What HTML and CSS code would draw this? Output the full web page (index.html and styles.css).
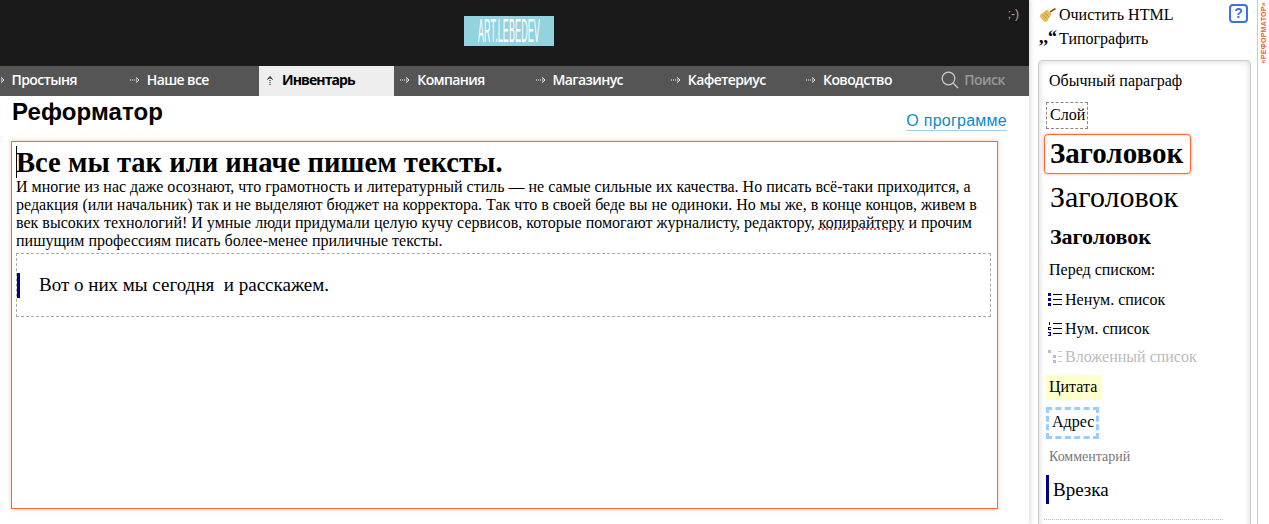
FILE: index.html
```html
<!DOCTYPE html>
<html lang="ru">

<head>
    <meta charset="UTF-8">
    <title>Реформатор</title>
    <link rel="stylesheet" href="styles.css">
</head>

<body>
    <svg class="defs" width="0" height="0">
        <symbol id="arr" viewBox="0 0 10 10">
            <path d="M0 5H8" fill="none" stroke="currentColor" stroke-dasharray="1 1"/>
            <path d="M6 2.5L9 5L6 7.5" fill="none" stroke="currentColor"/>
        </symbol>
    </svg>

    <div class="main">
        <div class="top">
            <div class="logo"><span>ART.LEBEDEV</span></div>
            <div class="smile">;-)</div>
        </div>
        <div class="nav">
            <a class="tab first"><svg class="arr"><use href="#arr"/></svg>Простыня</a>
            <a class="tab"><svg class="arr"><use href="#arr"/></svg>Наше все</a>
            <a class="tab active"><svg class="arr" viewBox="0 0 10 10"><path d="M5 10V2" fill="none" stroke="#000" stroke-dasharray="1 1"/><path d="M2.5 4.5L5 1.5L7.5 4.5" fill="none" stroke="#000"/></svg>Инвентарь</a>
            <a class="tab"><svg class="arr"><use href="#arr"/></svg>Компания</a>
            <a class="tab"><svg class="arr"><use href="#arr"/></svg>Магазинус</a>
            <a class="tab"><svg class="arr"><use href="#arr"/></svg>Кафетериус</a>
            <a class="tab"><svg class="arr"><use href="#arr"/></svg>Ководство</a>
            <div class="search">
                <svg width="18" height="18" viewBox="0 0 18 18"><circle cx="7.5" cy="7.5" r="6.3" fill="none" stroke="#ccc" stroke-width="1.2"/><path d="M12 12L17 17" stroke="#ccc" stroke-width="1.2"/></svg>
                Поиск
            </div>
        </div>
        <div class="title">
            <h1>Реформатор</h1>
            <a class="about">О программе</a>
        </div>
        <div class="editor">
            <h2 class="big"><span class="caret"></span>Все мы так или иначе пишем тексты.</h2>
            <p>И многие из нас даже осознают, что грамотность и литературный стиль &mdash; не самые сильные их качества. Но писать всё-таки приходится, а редакция (или начальник) так и не выделяют бюджет на корректора. Так что в своей беде вы не одиноки. Но мы же, в конце концов, живем в век высоких технологий! И умные люди придумали целую кучу сервисов, которые помогают журналисту, редактору, <span class="typo">копирайтеру</span> и прочим пишущим профессиям писать более-менее приличные тексты.</p>
            <div class="layer">
                <div class="inset">Вот о них мы сегодня &nbsp;и расскажем.</div>
            </div>
        </div>
    </div>

    <div class="side">
        <div class="tools">
            <div class="tool">
                <svg class="broom" width="17" height="15" viewBox="0 0 17 15">
                    <path d="M11 4L16.5 .5" stroke="#7a5a20" stroke-width="1.6"/>
                    <path d="M8 1.5L12.5 6L8 13.5L5.5 14L.5 8.5L1.5 6.5Z" fill="#e6bd5c"/>
                    <path d="M4 7L8 11M6 5L10 9" stroke="#b98d33" stroke-width=".8"/>
                </svg>
                Очистить HTML
            </div>
            <div class="tool"><span class="quotes">,,“</span> Типографить</div>
            <div class="help">?</div>
        </div>
        <div class="panel">
            <div class="pt">Обычный параграф</div>
            <div class="pt-layer">Слой</div>
            <div class="pt-h1">Заголовок</div>
            <div class="pt-h2">Заголовок</div>
            <div class="pt-h3">Заголовок</div>
            <div class="pt pt-before">Перед списком:</div>
            <div class="pt-list">
                <svg width="15" height="14" viewBox="0 0 15 14"><path d="M0 0h3v3H0zM0 5h3v3H0zM0 10h3v3H0z" fill="#000099"/><path d="M5 1.5h9M5 6.5h9M5 11.5h9" stroke="#000"/></svg>
                Ненум. список
            </div>
            <div class="pt-list">
                <svg width="15" height="14" viewBox="0 0 15 14"><path d="M1 0h1v3H1zM0 5h3v1H1v1h2v1H0V6h2V6H0zM0 10h3v4H0v-1h2v-.5H1v-1h1V11H0z" fill="#000099"/><path d="M5 1.5h9M5 6.5h9M5 11.5h9" stroke="#000"/></svg>
                Нум. список
            </div>
            <div class="pt-list off">
                <svg width="15" height="14" viewBox="0 0 15 14"><path d="M0 0h3v3H0zM5 5h3v3H5zM5 10h3v3H5z" fill="#b8b8e0"/><path d="M10 1.5h4M10 6.5h4M10 11.5h4" stroke="#ccc"/></svg>
                Вложенный список
            </div>
            <div class="pt-quote">Цитата</div>
            <div class="pt-addr">Адрес</div>
            <div class="pt-comment">Комментарий</div>
            <div class="pt-inset">Врезка</div>
            <div class="pt-line"></div>
        </div>
    </div>

    <div class="strip"><span>«РЕФОРМАТОР»</span></div>
</body>

</html>
```

FILE: styles.css
```css
* {
    margin: 0;
    padding: 0;
    box-sizing: border-box;
}

html,
body {
    height: 100%;
    overflow: hidden;
}

body {
    display: flex;
    font-family: "Liberation Serif", serif;
    font-size: 16px;
    color: #000;
    background: #fff;
}

.defs {
    position: absolute;
}

.main {
    width: 1029px;
    flex: none;
    position: relative;
    z-index: 1;
    background: #fff;
    box-shadow: 2px 0 4px rgba(0, 0, 0, .12);
}

.top {
    height: 66px;
    background: #1a1a1a;
    display: flex;
    justify-content: center;
    position: relative;
    padding: 16px 11px 0 0;
}

.logo {
    width: 90px;
    height: 30px;
    background: #93d2df;
    display: flex;
    justify-content: center;
    align-items: center;
}

.logo span {
    flex: none;
    font-family: "Liberation Sans", sans-serif;
    font-size: 9px;
    line-height: 10px;
    letter-spacing: 0.1px;
    color: #fff;
    transform: scaleY(3.6);
}

.smile {
    position: absolute;
    right: 10px;
    top: 7px;
    font-family: "Liberation Sans", sans-serif;
    font-size: 12px;
    color: #aaa;
}

.nav {
    height: 30px;
    background: #555;
    display: flex;
    font-family: "Open Sans", sans-serif;
    font-size: 14px;
    font-weight: 600;
    line-height: 24px;
    color: #fff;
}

.tab {
    flex: 0 0 135.25px;
    padding: 0 0 3px 6px;
    display: flex;
    align-items: center;
    white-space: nowrap;
    letter-spacing: -0.6px;
}

.tab.first {
    margin-left: -11.5px;
}

.tab.active {
    background: #eee;
    color: #000;
    font-weight: 700;
    letter-spacing: -0.9px;
}

.arr {
    width: 10px;
    height: 10px;
    margin-right: 7px;
    flex: none;
}

.search {
    display: flex;
    align-items: center;
    gap: 5px;
    padding: 0 0 3px 6px;
    color: #999;
    white-space: nowrap;
    letter-spacing: -0.5px;
}

.title {
    height: 45px;
    padding: 2px 22px 0 12px;
    display: flex;
    justify-content: space-between;
    font-family: "Liberation Sans", sans-serif;
}

.title h1 {
    font-size: 24px;
    line-height: 28px;
    letter-spacing: 0.1px;
}

.about {
    height: 19px;
    margin-top: 14px;
    font-size: 16px;
    line-height: 18px;
    letter-spacing: 0.25px;
    color: #0a8acb;
    border-bottom: 1px solid #a5cfe8;
}

.editor {
    width: 987px;
    height: 368px;
    margin-left: 11px;
    padding: 4px 6px 0 4px;
    border: 1px solid #ff6633;
    box-shadow: 0 0 4px rgba(255, 102, 51, .4);
    font-size: 16px;
    line-height: 18px;
}

.big {
    position: relative;
    padding-top: 1px;
    font-size: 28.6px;
    line-height: 31px;
}

.caret {
    position: absolute;
    left: 0;
    top: 0;
    width: 1px;
    height: 32px;
    background: #000;
}

.typo {
    text-decoration: underline dotted #e02020;
}

.layer {
    height: 64px;
    margin-top: 3px;
    padding: 19px 0 0 0;
    border: 1px dashed #aaa;
}

.inset {
    height: 25px;
    padding-left: 19px;
    border-left: 3px solid #000088;
    font-size: 19px;
    line-height: 24px;
}

.side {
    width: 228px;
    flex: none;
    padding-left: 9px;
    overflow: hidden;
}

.tools {
    height: 60px;
    padding-top: 5px;
    position: relative;
}

.tool {
    height: 24px;
    line-height: 20px;
    white-space: nowrap;
    display: flex;
    align-items: flex-start;
    gap: 3px;
    padding-left: 1px;
}

.broom {
    margin-top: 3px;
}

.quotes {
    width: 17px;
    font-weight: 700;
    font-size: 18px;
    line-height: 16px;
}

.help {
    position: absolute;
    left: 191px;
    top: 4px;
    width: 19px;
    height: 19px;
    border: 2px solid #3b6ff0;
    border-radius: 4px;
    font-family: "Liberation Sans", sans-serif;
    font-size: 14px;
    font-weight: 700;
    line-height: 15px;
    text-align: center;
    color: #3b6ff0;
}

.panel {
    width: 213px;
    height: 520px;
    padding: 0 5px;
    border: 1px solid #ccc;
    border-radius: 4px;
    box-shadow: inset 0 0 6px rgba(0, 0, 0, .18);
}

.pt {
    margin: 10px 0 0 5px;
    line-height: 20px;
}

.pt-layer {
    width: 42px;
    height: 27px;
    margin: 11px 0 0 2px;
    padding-left: 3px;
    border: 1px dashed #888;
    line-height: 23px;
}

.pt-h1 {
    width: 147px;
    height: 40px;
    margin-top: 5px;
    padding-left: 5px;
    border: 1px solid #ff6633;
    border-radius: 4px;
    box-shadow: 0 0 3px rgba(255, 102, 51, .6);
    background: #fff;
    font-size: 29px;
    font-weight: 700;
    line-height: 37px;
}

.pt-h2 {
    margin: 6px 0 0 6px;
    font-size: 30px;
    line-height: 34px;
}

.pt-h3 {
    margin: 10px 0 0 6px;
    font-size: 22px;
    font-weight: 700;
    line-height: 26px;
}

.pt-before {
    margin-top: 10px;
}

.pt-list {
    height: 28.5px;
    margin-left: 4px;
    display: flex;
    align-items: center;
    gap: 2px;
    white-space: nowrap;
}

.pt-before + .pt-list {
    margin-top: 6px;
}

.off {
    color: #bbb;
}

.pt-quote {
    width: 55px;
    height: 25px;
    margin: 3px 0 0 2px;
    padding-left: 3px;
    background: #ffc;
    line-height: 24px;
}

.pt-addr {
    width: 53px;
    height: 32px;
    margin: 7px 0 0 2px;
    padding-left: 3px;
    border: 3px dashed #9cf;
    line-height: 24px;
}

.pt-comment {
    margin: 9px 0 0 5px;
    font-size: 14px;
    line-height: 18px;
    color: #777;
}

.pt-inset {
    height: 29px;
    margin: 9px 0 0 2px;
    padding-left: 4px;
    border-left: 3px solid #000088;
    font-size: 19px;
    line-height: 30px;
}

.pt-line {
    width: 179px;
    margin-top: 15px;
    border-top: 1px dotted #bbb;
}

.strip {
    width: 12px;
    flex: none;
    border-left: 1px solid #ccc;
    padding-top: 2px;
}

.strip span {
    display: block;
    writing-mode: vertical-rl;
    transform: rotate(180deg);
    font-family: "Liberation Sans", sans-serif;
    font-size: 7px;
    font-weight: 700;
    line-height: 11px;
    letter-spacing: 0.3px;
    color: #e8622a;
    white-space: nowrap;
}
```
